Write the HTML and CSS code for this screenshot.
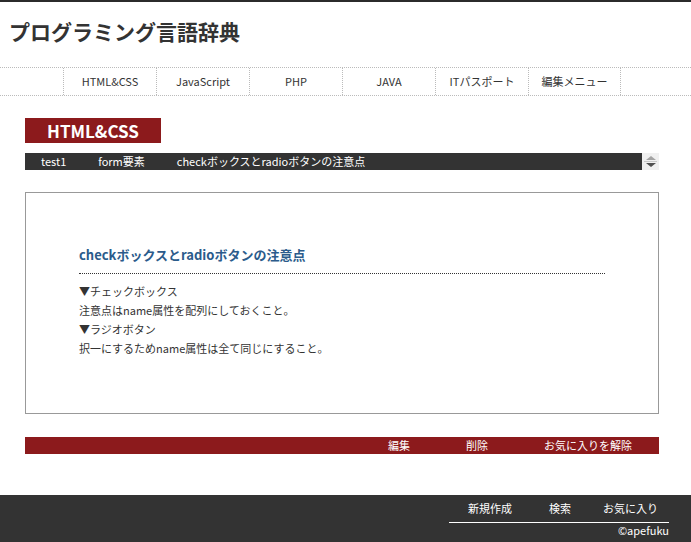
FILE: index.html
```html
<!DOCTYPE html>
<html lang="ja">
<head>
<meta charset="utf-8">
<title>プログラミング言語辞典</title>
<link rel="stylesheet" href="styles.css">
</head>
<body>
<header class="site-header">
  <h1 class="site-title">プログラミング言語辞典</h1>
</header>
<nav class="global-nav">
  <ul class="nav-list">
    <li class="nav-item">HTML&amp;CSS</li>
    <li class="nav-item">JavaScript</li>
    <li class="nav-item">PHP</li>
    <li class="nav-item">JAVA</li>
    <li class="nav-item">ITパスポート</li>
    <li class="nav-item">編集メニュー</li>
  </ul>
</nav>
<main class="main">
  <div class="category">HTML&amp;CSS</div>
  <div class="crumb-row">
    <ul class="crumbs">
      <li class="crumb">test1</li>
      <li class="crumb">form要素</li>
      <li class="crumb">checkボックスとradioボタンの注意点</li>
    </ul>
    <div class="spin">
      <span class="spin-up"></span>
      <span class="spin-line"></span>
      <span class="spin-down"></span>
    </div>
  </div>
  <article class="entry">
    <h2 class="entry-title">checkボックスとradioボタンの注意点</h2>
    <p class="entry-text">▼チェックボックス<br>注意点はname属性を配列にしておくこと。<br>▼ラジオボタン<br>択一にするためname属性は全て同じにすること。</p>
  </article>
  <ul class="actions">
    <li class="action">編集</li>
    <li class="action">削除</li>
    <li class="action">お気に入りを解除</li>
  </ul>
</main>
<footer class="site-footer">
  <div class="footer-inner">
    <ul class="footer-nav">
      <li class="footer-link link-new">新規作成</li>
      <li class="footer-link link-search">検索</li>
      <li class="footer-link link-fav">お気に入り</li>
    </ul>
    <p class="copyright">©apefuku</p>
  </div>
</footer>
</body>
</html>
```

FILE: styles.css
```css
* { box-sizing: border-box; }
html, body { margin: 0; padding: 0; }
body {
  font-family: "Noto Sans CJK JP", "DejaVu Sans", sans-serif;
  color: #333;
  background: #fff;
  width: 691px;
  height: 542px;
  overflow: hidden;
  display: flex;
  flex-direction: column;
}
ul { list-style: none; margin: 0; padding: 0; }
p { margin: 0; }

.site-header {
  border-top: 2px solid #2b2b2b;
  height: 67px;
  padding: 17px 0 0 9px;
}
.site-title {
  margin: 0;
  font-size: 21px;
  line-height: 24px;
  font-weight: bold;
  color: #333;
}

.global-nav {
  border-top: 1px dotted #bbb;
  border-bottom: 1px dotted #bbb;
  height: 29px;
}
.nav-list {
  display: flex;
  margin-left: 63px;
  height: 27px;
}
.nav-item {
  width: 93px;
  border-left: 1px dotted #bbb;
  font-size: 11px;
  line-height: 26px;
  text-align: center;
  color: #333;
}
.nav-item:last-child { border-right: 1px dotted #bbb; }

.main {
  margin-left: 25px;
  width: 634px;
  padding-top: 22px;
}
.category {
  width: 136px;
  height: 25px;
  background: #8c1a1c;
  color: #fff;
  font-size: 17px;
  font-weight: bold;
  line-height: 25px;
  text-align: center;
}
.crumb-row {
  display: flex;
  margin-top: 10px;
  height: 17px;
}
.crumbs {
  flex: 1;
  display: flex;
  background: #333;
}
.crumb {
  color: #fff;
  font-size: 11px;
  line-height: 17px;
  padding: 0 16px;
  white-space: nowrap;
}
.spin {
  width: 17px;
  background: #f0f0f0;
  display: flex;
  flex-direction: column;
  align-items: center;
  justify-content: center;
  gap: 1px;
}
.spin-up {
  width: 0; height: 0;
  border-left: 5px solid transparent;
  border-right: 5px solid transparent;
  border-bottom: 4px solid #a3a3a3;
}
.spin-line {
  width: 13px;
  height: 1px;
  background: #c8c8c8;
}
.spin-down {
  width: 0; height: 0;
  border-left: 5px solid transparent;
  border-right: 5px solid transparent;
  border-top: 4px solid #505050;
}

.entry {
  margin-top: 22px;
  height: 222px;
  border: 1px solid #999;
  padding: 52px 53px 0 53px;
}
.entry-title {
  margin: 0;
  font-size: 13px;
  font-weight: bold;
  color: #2b5b8b;
  line-height: 20px;
  padding-bottom: 8px;
  border-bottom: 1px dotted #333;
}
.entry-text {
  margin-top: 8px;
  font-size: 11px;
  line-height: 19px;
  color: #333;
}

.actions {
  margin-top: 23px;
  height: 17px;
  background: #8c1a1c;
  display: flex;
  justify-content: flex-end;
  gap: 56px;
  padding-right: 27px;
}
.action {
  color: #fff;
  font-size: 11px;
  line-height: 17px;
  white-space: nowrap;
}

.site-footer {
  margin-top: auto;
  height: 47px;
  flex-shrink: 0;
  background: #333;
  display: flex;
  justify-content: flex-end;
  padding-right: 22px;
}
.footer-inner {
  width: 220px;
  padding-top: 5px;
}
.footer-nav {
  display: flex;
  border-bottom: 1px solid #fff;
  height: 23px;
  padding-left: 19px;
}
.footer-link {
  color: #fff;
  font-size: 11px;
  line-height: 17px;
  white-space: nowrap;
  flex-shrink: 0;
}
.link-search { margin-left: 37px; }
.link-fav { margin-left: 32px; }
.copyright {
  color: #fff;
  font-size: 11px;
  line-height: 15px;
  text-align: right;
}
```
